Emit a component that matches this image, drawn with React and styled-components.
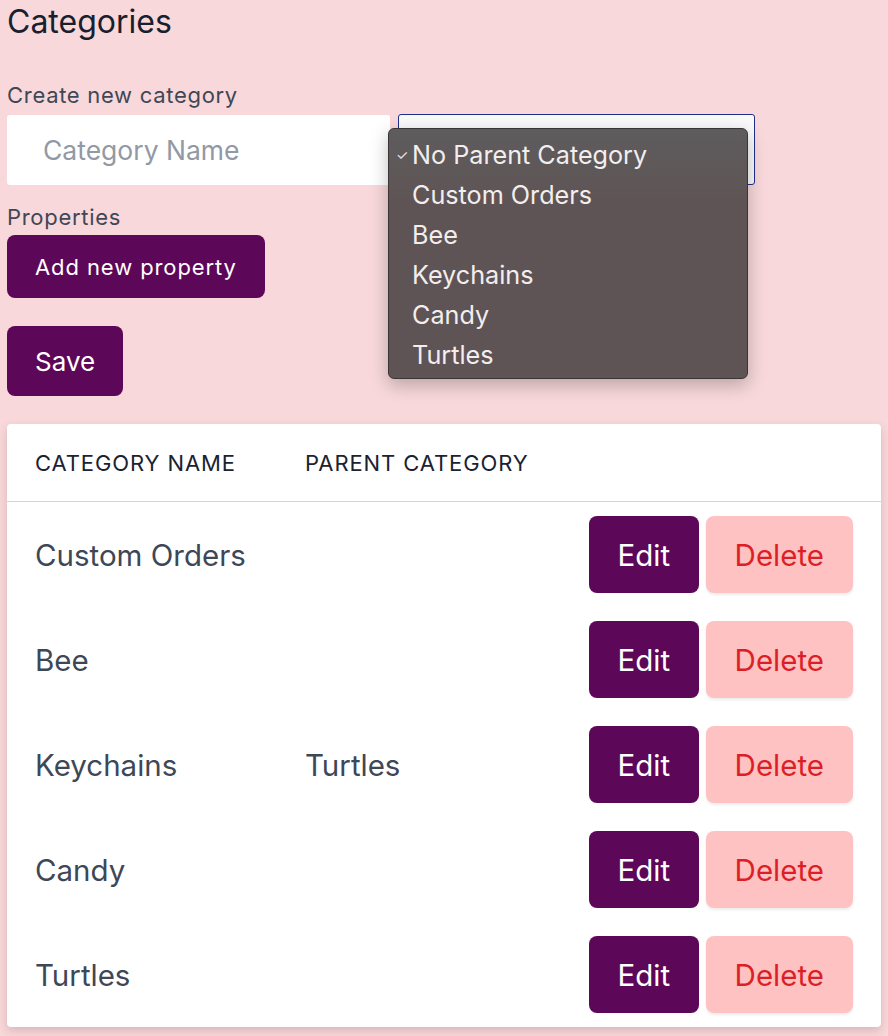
import React from "react";
import styled, { createGlobalStyle } from "styled-components";

const GlobalStyle = createGlobalStyle`
  html, body {
    margin: 0;
    padding: 0;
    background: #f8d8da;
  }
  body {
    font-family: Inter, "Noto Sans", "Liberation Sans", sans-serif;
    color: #1f2937;
  }
`;

const Page = styled.div`
  padding: 0 7px 8px 7px;
  min-height: 1036px;
  box-sizing: border-box;
`;

const Title = styled.h1`
  margin: 0;
  padding-top: 2px;
  font-size: 32px;
  line-height: 40px;
  font-weight: 400;
  color: #18202e;
`;

const Label = styled.label`
  display: block;
  font-size: 22px;
  letter-spacing: 0.7px;
  line-height: 28px;
  color: #3f4756;
  margin-top: ${p => p.$top || 0}px;
`;

const FormRow = styled.div`
  display: flex;
  gap: 8px;
  margin-top: 6px;
`;

const NameInput = styled.input`
  width: 383px;
  height: 70px;
  box-sizing: border-box;
  border: none;
  border-radius: 3px;
  background: #fff;
  padding: 0 36px;
  font-family: inherit;
  font-size: 26.5px;
  color: #1f2937;
  outline: none;
  &::placeholder {
    color: #9299a4;
  }
`;

const SelectWrap = styled.div`
  position: relative;
`;

const SelectBox = styled.div`
  width: 357px;
  height: 71px;
  margin-top: -1px;
  box-sizing: border-box;
  border: 1px solid #1e2f8a;
  border-radius: 3px;
  background: #fafafa;
`;

const Menu = styled.ul`
  position: absolute;
  left: -10px;
  top: 13px;
  width: 360px;
  height: 251px;
  box-sizing: border-box;
  margin: 0;
  padding: 6px 0 0 0;
  list-style: none;
  background: linear-gradient(180deg, #5e5c5d 0%, #5f5455 30%, #5f5455 100%);
  border: 1px solid #3a3536;
  border-radius: 6px;
  box-shadow: 0 6px 18px rgba(0, 0, 0, 0.25);
  z-index: 10;
`;

const MenuItem = styled.li`
  position: relative;
  height: 40px;
  line-height: 40px;
  padding-left: 23px;
  font-size: 25.2px;
  color: #f3eeee;
`;

const Check = styled.span`
  position: absolute;
  left: 7px;
  top: 0;
  font-size: 14px;
  color: #e8e2e2;
`;

const PrimaryButton = styled.button`
  display: block;
  background: #5d0758;
  color: #fff;
  border: none;
  border-radius: 8px;
  font-family: inherit;
  font-size: ${p => p.$size}px;
  letter-spacing: ${p => p.$track || 0}px;
  height: ${p => p.$height}px;
  padding: 0 ${p => p.$pad}px;
  margin-top: ${p => p.$top || 0}px;
  cursor: pointer;
`;

const Card = styled.div`
  margin-top: 28px;
  background: #fff;
  border-radius: 4px;
  box-shadow: 0 4px 10px rgba(120, 60, 70, 0.22);
  overflow: hidden;
`;

const Table = styled.table`
  width: 100%;
  border-collapse: collapse;
`;

const Th = styled.th`
  text-align: left;
  font-weight: 400;
  font-size: 22px;
  letter-spacing: 0.9px;
  color: #1b2230;
  height: 77px;
  padding: 0 0 0 28px;
  border-bottom: 1px solid #d4d4d4;
  white-space: nowrap;
  width: ${p => p.$w || "auto"};
`;

const Td = styled.td`
  font-size: 29.5px;
  color: #3e4756;
  height: 105px;
  padding: 0 0 0 28px;
  white-space: nowrap;
`;

const Actions = styled.td`
  text-align: right;
  padding: 0 28px 0 0;
  white-space: nowrap;
`;

const ActionRow = styled.div`
  display: inline-flex;
  gap: 7px;
`;

const RowButton = styled.button`
  height: 77px;
  border: none;
  border-radius: 8px;
  font-family: inherit;
  font-size: 29.5px;
  padding: 0 ${p => (p.$danger ? 29 : 28.5)}px;
  background: ${p => (p.$danger ? "#fec2c2" : "#5d0758")};
  color: ${p => (p.$danger ? "#dc1f26" : "#fff")};
  box-shadow: ${p => (p.$danger ? "0 2px 3px rgba(0,0,0,0.08)" : "none")};
  cursor: pointer;
`;

const options = [
  "No Parent Category",
  "Custom Orders",
  "Bee",
  "Keychains",
  "Candy",
  "Turtles"
];

const categories = [
  { name: "Custom Orders", parent: "" },
  { name: "Bee", parent: "" },
  { name: "Keychains", parent: "Turtles" },
  { name: "Candy", parent: "" },
  { name: "Turtles", parent: "" }
];

export default function App() {
  return (
    <Page>
      <GlobalStyle />
      <Title>Categories</Title>
      <Label $top={39}>Create new category</Label>
      <FormRow>
        <NameInput placeholder="Category Name" />
        <SelectWrap>
          <SelectBox />
          <Menu>
            {options.map((o, i) => (
              <MenuItem key={o}>
                {i === 0 && <Check>✓</Check>}
                {o}
              </MenuItem>
            ))}
          </Menu>
        </SelectWrap>
      </FormRow>
      <Label $top={18}>Properties</Label>
      <PrimaryButton $size={22} $track={0.9} $height={63} $pad={28} $top={4}>
        Add new property
      </PrimaryButton>
      <PrimaryButton $size={26} $height={70} $pad={28} $top={28}>
        Save
      </PrimaryButton>
      <Card>
        <Table>
          <thead>
            <tr>
              <Th $w="242px">CATEGORY NAME</Th>
              <Th>PARENT CATEGORY</Th>
              <Th />
            </tr>
          </thead>
          <tbody>
            {categories.map(c => (
              <tr key={c.name}>
                <Td>{c.name}</Td>
                <Td>{c.parent}</Td>
                <Actions>
                  <ActionRow>
                    <RowButton>Edit</RowButton>
                    <RowButton $danger>Delete</RowButton>
                  </ActionRow>
                </Actions>
              </tr>
            ))}
          </tbody>
        </Table>
      </Card>
    </Page>
  );
}
